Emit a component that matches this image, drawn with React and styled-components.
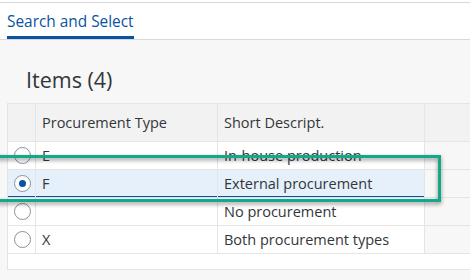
import React from "react";
import styled, { createGlobalStyle } from "styled-components";

const Global = createGlobalStyle`
  html, body { margin: 0; padding: 0; background: #ffffff; overflow: hidden; }
  body { font-family: "Open Sans", "Noto Sans", sans-serif; color: #32363a; }
  #root { width: 470px; height: 280px; overflow: hidden; position: relative; }
`;

const Page = styled.div`
  width: 470px;
  height: 280px;
  display: flex;
  flex-direction: column;
  padding-top: 2px;
  box-sizing: border-box;
  background: #ffffff;
`;

const TabBar = styled.div`
  display: flex;
  height: 36px;
  border-top: 1px solid #d9d9d9;
  border-bottom: 1px solid #d9d9d9;
  background: #ffffff;
  padding-left: 7px;
  flex: none;
`;

const Tab = styled.div`
  display: flex;
  align-items: center;
  height: 36px;
  box-sizing: border-box;
  font-size: 15.4px;
  color: #0854a0;
  border-bottom: 3px solid ${(p) => (p.$active ? "#0854a0" : "transparent")};
  padding-top: 3px;
`;

const Content = styled.div`
  flex: 1;
  background: #f7f7f7;
  padding: 25px 0 0 7px;
  overflow: hidden;
`;

const Title = styled.h2`
  margin: 0 0 9px 19px;
  font-size: 21.5px;
  line-height: 29px;
  font-weight: 400;
  color: #32363a;
`;

const Table = styled.div`
  width: 480px;
  border-top: 1px solid #e5e5e5;
  border-left: 1px solid #e5e5e5;
  display: flex;
  flex-direction: column;
  font-size: 14.5px;
`;

const Row = styled.div`
  display: grid;
  grid-template-columns: 28px 182px 207px 1fr;
  height: ${(p) => (p.$header ? "38px" : "28px")};
  box-sizing: border-box;
  border-bottom: 1px solid #e5e5e5;
  background: ${(p) => (p.$header ? "#f2f2f2" : "#ffffff")};
`;

const Cell = styled.div`
  display: flex;
  align-items: center;
  box-sizing: border-box;
  padding-left: ${(p) => (p.$radio ? "0" : "6px")};
  justify-content: ${(p) => (p.$radio ? "center" : "flex-start")};
  border-right: 1px solid #e5e5e5;
  background: ${(p) =>
    p.$dummy ? (p.$header ? "#f2f2f2" : "#f7f7f7") : p.$selected ? "#e5f0fa" : "transparent"};
  box-shadow: ${(p) => (p.$selected ? "inset 0 -1px 0 #0854a0" : "none")};
  white-space: nowrap;
  color: #32363a;
`;

const Filler = styled.div`
  height: 15px;
  background: #ffffff;
  border-bottom: 1px solid #e5e5e5;
`;

const Radio = styled.span`
  width: 17px;
  height: 17px;
  margin-left: 2px;
  box-sizing: border-box;
  border-radius: 50%;
  border: 1px solid #89919a;
  background: #ffffff;
  display: flex;
  align-items: center;
  justify-content: center;
  &::after {
    content: "";
    width: 7px;
    height: 7px;
    border-radius: 50%;
    background: ${(p) => (p.$checked ? "#0854a0" : "transparent")};
  }
`;

const Highlight = styled.div`
  position: absolute;
  left: -10px;
  top: 155px;
  width: 451px;
  height: 47px;
  box-sizing: border-box;
  border: 3px solid #10aa88;
  filter: drop-shadow(0 2px 2px rgba(0, 0, 0, 0.45));
  pointer-events: none;
`;

const rows = [
  { type: "E", desc: "In-house production" },
  { type: "F", desc: "External procurement", selected: true },
  { type: "", desc: "No procurement" },
  { type: "X", desc: "Both procurement types" },
];

export default function App() {
  return (
    <>
      <Global />
      <Page>
        <TabBar>
          <Tab $active>Search and Select</Tab>
        </TabBar>
        <Content>
          <Title>Items (4)</Title>
          <Table>
            <Row $header>
              <Cell $radio />
              <Cell>Procurement Type</Cell>
              <Cell>Short Descript.</Cell>
              <Cell $dummy $header />
            </Row>
            {rows.map((r) => (
              <Row key={r.desc}>
                <Cell $radio $selected={r.selected}>
                  <Radio $checked={r.selected} />
                </Cell>
                <Cell $selected={r.selected}>{r.type}</Cell>
                <Cell $selected={r.selected}>{r.desc}</Cell>
                <Cell $dummy />
              </Row>
            ))}
            <Filler />
          </Table>
        </Content>
      </Page>
      <Highlight />
    </>
  );
}
